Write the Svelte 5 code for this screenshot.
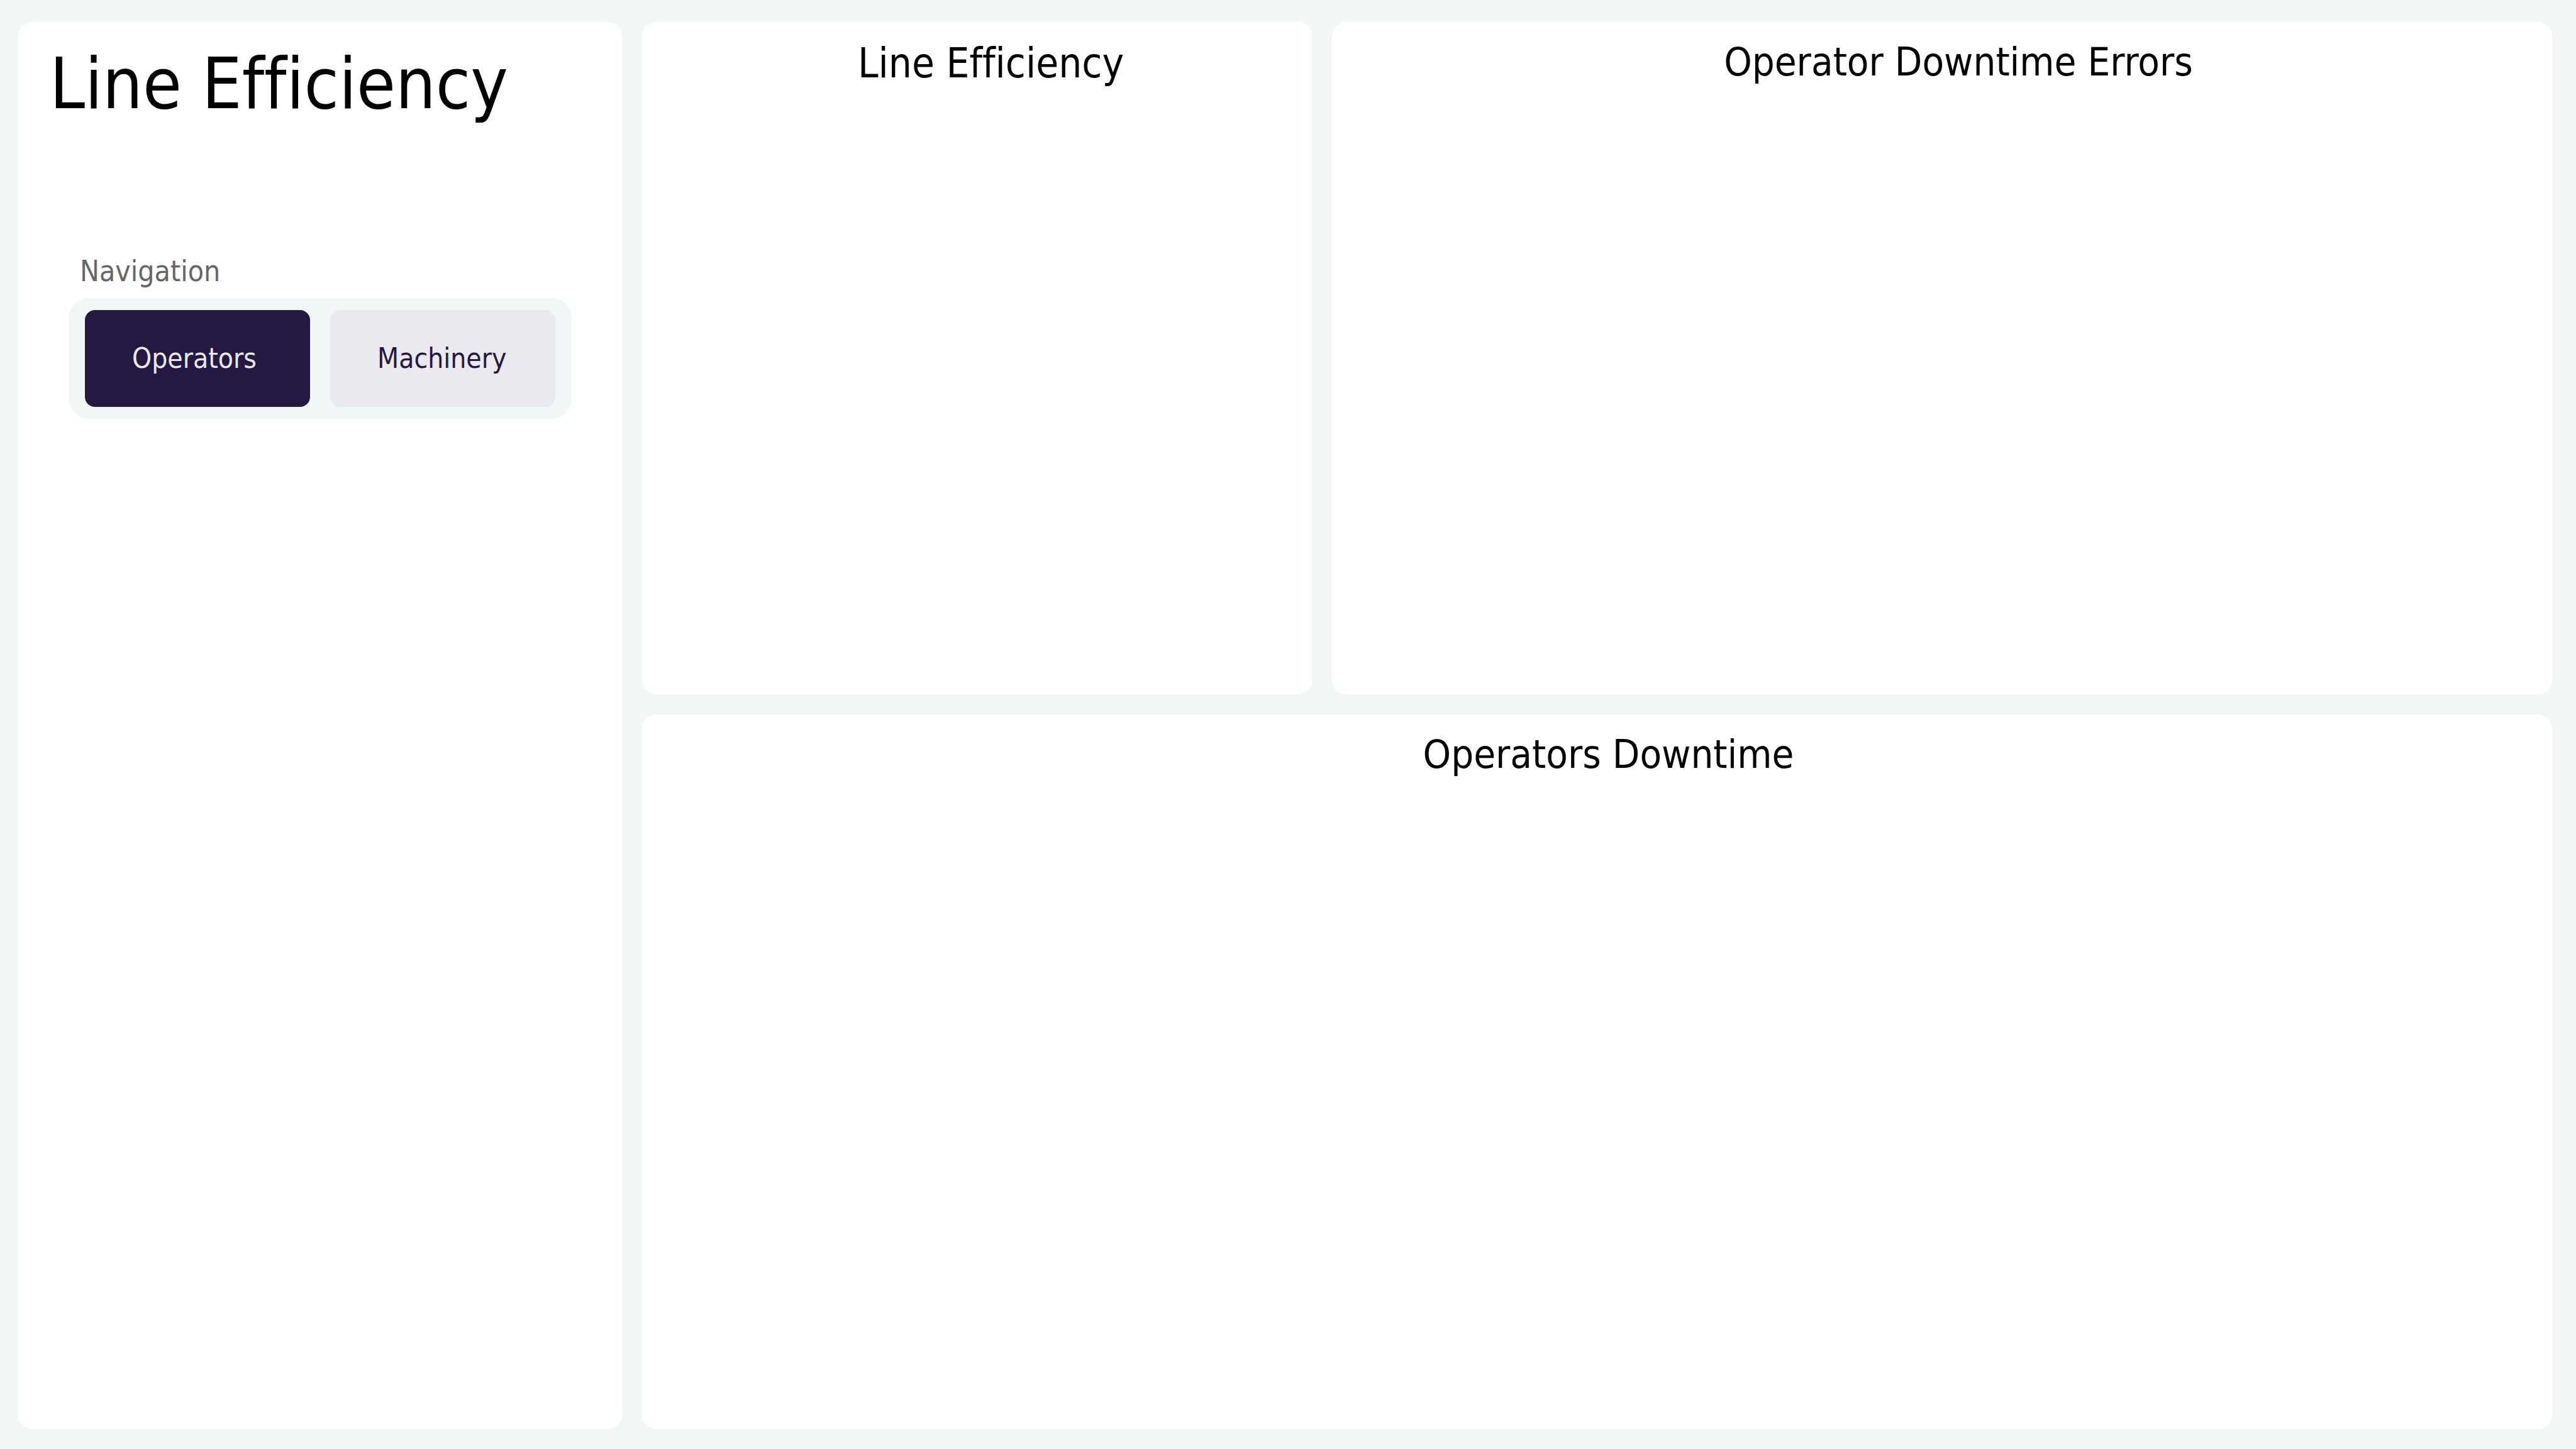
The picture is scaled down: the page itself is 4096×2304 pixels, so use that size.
<script>
  const views = ['Operators', 'Machinery'];
  let selected = $state('Operators');
</script>

<div class="dashboard">
  <aside class="card sidebar">
    <h1>Line Efficiency</h1>
    <p class="label" id="nav-label">Navigation</p>
    <nav aria-labelledby="nav-label">
      {#each views as view}
        <button
          type="button"
          class:active={selected === view}
          aria-pressed={selected === view}
          onclick={() => (selected = view)}>{view}</button>
      {/each}
    </nav>
  </aside>

  <main>
    <section class="card">
      <h2 class="large">Line Efficiency</h2>
    </section>
    <section class="card">
      <h2>Operator Downtime Errors</h2>
    </section>
    <section class="card wide">
      <h2>Operators Downtime</h2>
    </section>
  </main>
</div>

<style>
  :global(body) {
    background: #f1f7f7;
  }

  .dashboard {
    box-sizing: border-box;
    min-height: 100vh;
    display: grid;
    grid-template-columns: 960fr 3037fr;
    gap: 32px;
    padding: 35px 38px 32px 29px;
    font-family: Tahoma, "DejaVu Sans Condensed", "DejaVu Sans", sans-serif;
    font-variant-ligatures: none;
    color: #000;
  }

  main {
    display: grid;
    grid-template-columns: 1065fr 1940fr;
    grid-template-rows: 1069fr 1136fr;
    gap: 32px;
  }

  .card {
    min-width: 0;
    background: #fff;
    border-radius: 22px;
  }

  .wide {
    grid-column: 1 / -1;
  }

  .sidebar {
    box-sizing: border-box;
    padding: 28px 80px;
  }

  h1,
  h2,
  p {
    margin: 0;
    font-weight: 400;
    white-space: nowrap;
  }

  h1 {
    margin-left: -30px;
    font-size: 112px;
    line-height: 140px;
  }

  h2 {
    padding: 24px 0 0 52px;
    font-size: 63px;
    line-height: 80px;
    text-align: center;
  }

  .large {
    padding-left: 44px;
    font-size: 65px;
    line-height: 84px;
  }

  .wide h2 {
    padding-left: 36px;
  }

  .label {
    margin-top: 198px;
    padding-left: 18px;
    color: #666;
    font-size: 46px;
    line-height: 60px;
  }

  nav {
    display: grid;
    grid-template-columns: 1fr 1fr;
    gap: 32px;
    margin-top: 13px;
    padding: 19px 26px;
    border-radius: 32px;
    background: #f1f7f7;
  }

  button {
    height: 154px;
    padding: 0 0 0 75px;
    border: 0;
    border-radius: 16px;
    background: #eae9ed;
    color: #231942;
    font-family: inherit;
    font-size: 44px;
    font-variant-ligatures: inherit;
    line-height: 56px;
    text-align: left;
    cursor: pointer;
  }

  .active {
    background: #231942;
    color: #eae9ed;
  }
</style>
